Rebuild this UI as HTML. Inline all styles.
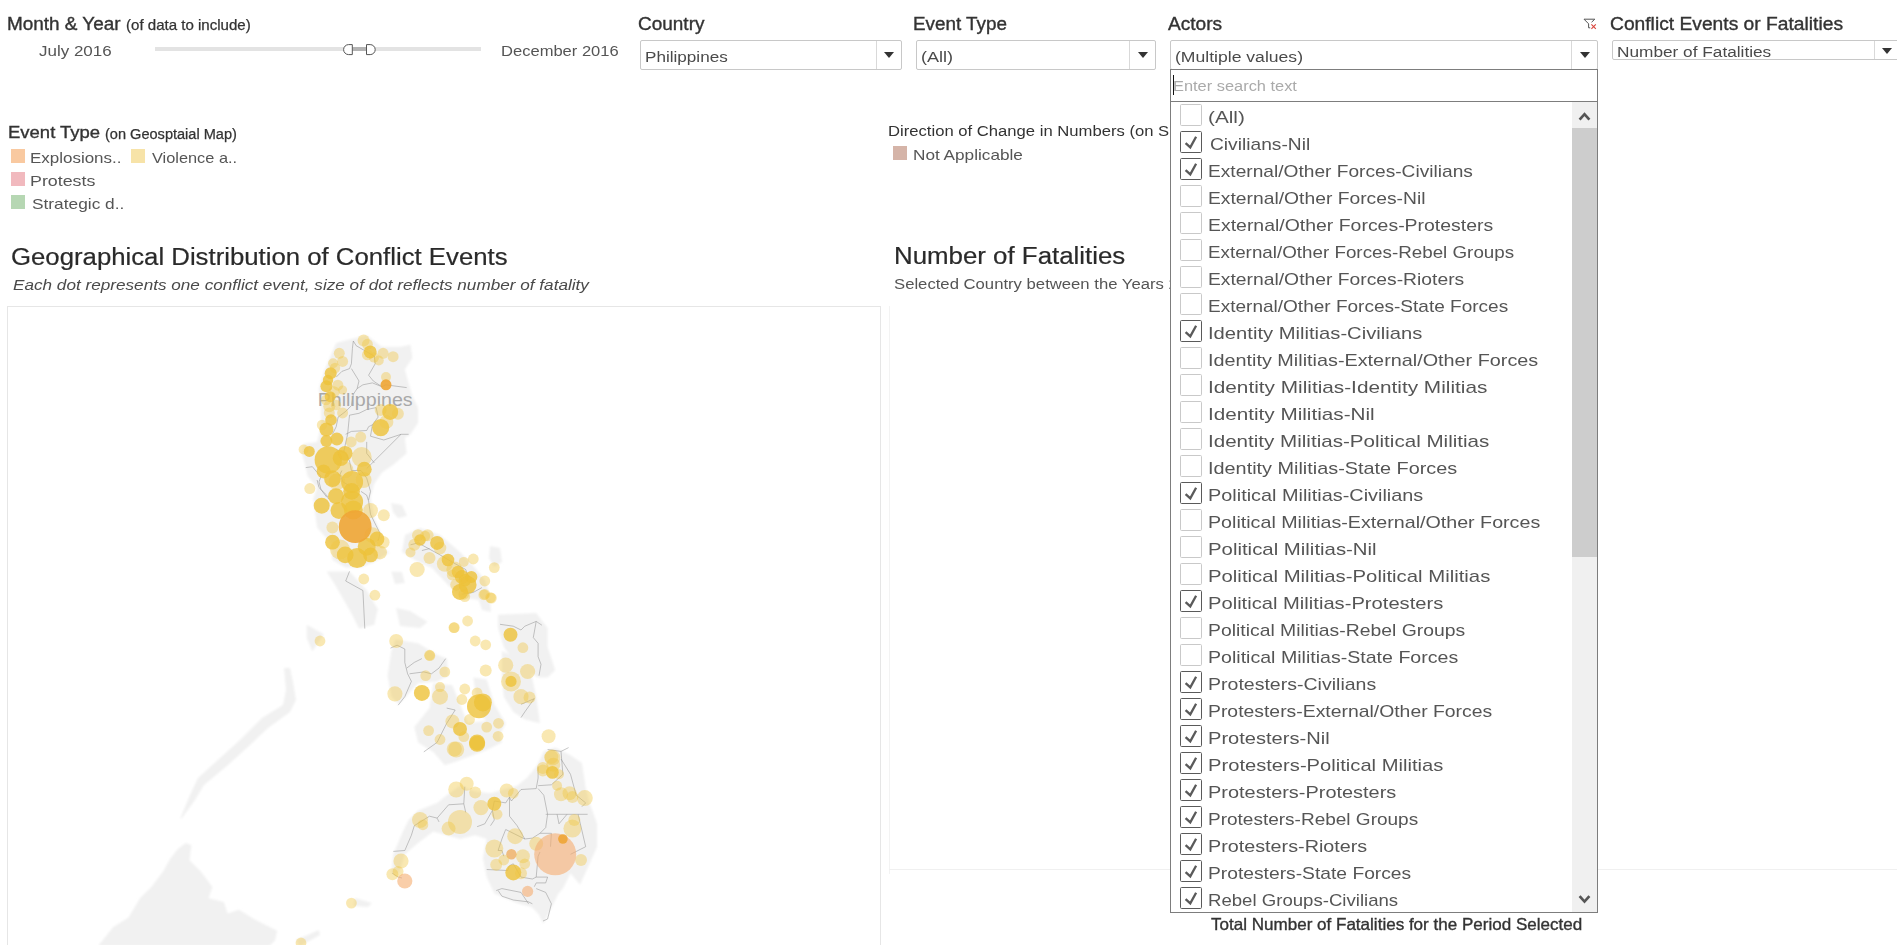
<!DOCTYPE html>
<html><head><meta charset="utf-8"><style>
*{margin:0;padding:0;box-sizing:border-box}
html,body{width:1897px;height:945px;overflow:hidden;background:#fff;font-family:"Liberation Sans",sans-serif}
.t{position:absolute;white-space:nowrap;line-height:1;transform-origin:0 0}
.a{position:absolute}
.dd{position:absolute;border:1px solid #c8c8c8;border-radius:2px;background:#fff}
.dd .dv{position:absolute;top:0;bottom:0;width:1px;background:#d9d9d9}
.tri{position:absolute;width:0;height:0;border-left:5px solid transparent;border-right:5px solid transparent;border-top:6px solid #333}
.cb{position:absolute;left:1180.2px;width:21.6px;height:21.6px;border:1px solid #c9c9c9;border-radius:1.6px;background:#fff}
.cb.on{border:1.2px solid #5a5a5a}
.cb svg{position:absolute;left:-1.2px;top:-1.2px}
</style></head><body>
<!-- slider -->
<div class="a" style="left:155px;top:47px;width:326px;height:4px;background:#e3e3e3"></div>
<div class="a" style="left:352px;top:47px;width:15px;height:4px;background:#b3b3b3"></div>
<svg class="a" style="left:340px;top:40px" width="40" height="18" viewBox="0 0 40 18">
<path d="M12.3 4.6 H8.6 A5 5 0 0 0 8.6 14.6 H12.3 Z" fill="#fff" stroke="#555" stroke-width="1"/>
<path d="M26.5 4.6 H30.2 A5 5 0 0 1 30.2 14.6 H26.5 Z" fill="#fff" stroke="#555" stroke-width="1"/>
</svg>
<!-- dropdowns -->
<div class="dd" style="left:640px;top:40px;width:262px;height:30px"><div class="dv" style="left:235px"></div><div class="tri" style="left:243px;top:11px"></div></div>
<div class="dd" style="left:916px;top:40px;width:240px;height:30px"><div class="dv" style="left:212px"></div><div class="tri" style="left:221px;top:11px"></div></div>
<div class="dd" style="left:1170px;top:40px;width:428px;height:30px"><div class="dv" style="left:400px"></div><div class="tri" style="left:408.5px;top:11px"></div></div>
<div class="dd" style="left:1612px;top:40px;width:300px;height:20px"><div class="dv" style="left:261px"></div><div class="tri" style="left:269px;top:6.5px"></div></div>
<!-- filter icon -->
<svg class="a" style="left:1582px;top:17px" width="16" height="14" viewBox="0 0 16 14">
<path d="M2 2.2 H12.8 L9.6 5.2 M2 2.2 L6.6 6.8 V10.8 H8.2" fill="none" stroke="#555" stroke-width="1"/>
<path d="M9.4 7.4 L13.8 11.8 M13.8 7.4 L9.4 11.8" stroke="#d9453c" stroke-width="1.1"/>
</svg>
<!-- legend swatches -->
<div class="a" style="left:11px;top:149px;width:14px;height:14px;background:#f9c9a0"></div>
<div class="a" style="left:131px;top:149px;width:14px;height:14px;background:#f7e3a8"></div>
<div class="a" style="left:11px;top:172px;width:14px;height:14px;background:#f1b9be"></div>
<div class="a" style="left:11px;top:195px;width:14px;height:14px;background:#b6d7b3"></div>
<div class="a" style="left:893px;top:146px;width:14px;height:14px;background:#d5b4a8"></div>
<!-- map frame -->
<svg class="a" style="left:0;top:0" width="1897" height="945" viewBox="0 0 1897 945"><defs><clipPath id="mc"><rect x="8.5" y="307" width="872" height="640"/></clipPath><filter id="bl" x="-5%" y="-5%" width="110%" height="110%"><feGaussianBlur stdDeviation="0.8"/></filter><filter id="bd" x="-5%" y="-5%" width="110%" height="110%"><feGaussianBlur stdDeviation="0.6"/></filter></defs><g clip-path="url(#mc)">
<g fill="#f1f1f1" filter="url(#bl)">
<polygon points="336.2,342.9 351.4,339.0 366.7,335.2 381.9,346.7 401.0,346.7 410.5,344.8 412.4,358.0 404.8,369.5 408.6,382.9 412.4,396.2 418.0,407.6 418.0,422.9 410.5,434.3 404.8,438.0 406.7,453.3 393.3,464.8 381.9,472.4 374.3,483.8 370.5,497.0 374.3,518.0 381.9,535.2 378.0,544.8 389.5,552.4 374.3,561.9 361.0,567.6 345.7,567.6 332.4,560.0 330.5,542.9 317.1,527.6 313.3,499.0 317.1,487.6 307.6,476.2 305.7,466.7 301.9,453.3 303.8,443.8 317.1,441.9 321.0,426.7 321.0,407.6 319.0,388.6 324.8,369.5 330.5,356.2"/>
<polygon points="405.0,535.0 420.0,528.0 440.0,535.0 460.0,552.0 475.0,568.0 485.0,580.0 490.0,596.0 480.0,600.0 462.0,598.0 448.0,585.0 432.0,568.0 415.0,560.0 402.0,552.0"/>
<polygon points="391.0,503.0 402.0,505.0 407.0,516.0 398.0,518.0 393.0,512.0"/>
<polygon points="490.0,546.0 500.0,548.0 502.0,562.0 494.0,567.0 489.0,558.0"/>
<polygon points="478.0,598.0 490.0,600.0 491.0,612.0 482.0,610.0"/>
<polygon points="326.7,571.4 349.5,571.4 366.7,590.5 378.0,609.5 377.1,612.0 374.3,624.8 359.0,628.6 351.4,613.3 336.2,586.7"/>
<polygon points="391.4,571.4 402.0,572.0 404.8,582.9 395.0,584.0"/>
<polygon points="498.1,614.8 536.2,612.9 547.6,628.1 547.6,647.1 555.2,670.0 547.6,677.6 538.1,677.6 528.6,671.9 517.1,666.2 503.8,647.1 498.1,628.1"/>
<polygon points="501.9,651.0 513.3,656.7 530.5,670.0 536.2,696.7 540.0,723.3 524.8,719.5 513.3,711.9 503.8,696.7 501.9,677.6"/>
<polygon points="473.3,677.6 486.7,679.5 494.3,704.3 505.7,723.3 500.0,734.8 486.7,723.3 477.1,704.3"/>
<polygon points="395.2,639.5 418.1,643.3 437.1,654.8 446.7,658.6 448.6,675.7 437.1,681.4 418.1,683.3 399.0,704.3 391.4,696.7 387.6,675.7 391.4,651.0"/>
<polygon points="433.3,683.3 452.4,685.2 460.0,704.3 467.6,723.3 498.1,719.5 501.9,742.4 486.7,750.0 456.2,761.4 444.8,765.2 433.3,751.9 418.1,742.4 414.3,727.1 429.5,708.1"/>
<polygon points="396.0,608.0 410.0,611.0 427.6,622.0 420.0,628.0 400.0,626.0"/>
<polygon points="391.4,873.3 393.3,854.3 402.9,831.4 408.6,820.0 418.1,810.5 437.1,802.9 446.7,795.2 460.0,785.7 475.2,791.4 490.5,793.3 503.8,789.5 517.1,785.7 526.7,778.1 536.2,766.7 543.8,751.4 555.2,747.6 570.5,755.2 581.9,762.9 585.7,787.6 589.5,802.9 597.1,823.8 597.1,846.7 589.5,863.8 580.0,884.8 570.5,873.3 562.9,888.6 558.5,893.5 551.8,907.0 543.3,923.8 538.3,913.7 531.5,907.0 518.0,903.6 494.4,893.5 486.7,877.1 482.9,858.1 486.7,839.0 475.2,835.2 460.0,839.0 446.7,835.2 433.3,831.4 418.1,842.9 404.8,854.3 399.0,873.3"/>
<polygon points="284.0,668.0 286.0,690.0 283.0,705.0 262.0,718.0 240.0,740.0 220.0,758.0 198.0,778.0 190.0,795.0 180.0,819.0 182.0,818.0 195.0,800.0 204.0,785.0 228.0,765.0 250.0,745.0 268.0,728.0 290.0,712.0 296.0,700.0 293.0,682.0 290.0,668.0"/>
<polygon points="306.7,624.8 323.8,634.3 312.4,651.4 306.7,638.1"/>
<polygon points="185.7,843.1 191.4,845.0 189.5,860.2 201.0,871.7 212.4,886.9 208.6,898.3 223.8,902.1 227.6,913.6 239.0,909.8 254.3,919.3 277.1,930.7 275.2,940.2 269.5,946.0 98.1,946.0 113.3,926.9 128.6,917.4 140.0,898.3 151.4,886.9 162.9,871.7 170.5,858.3 178.1,848.8"/>
<polygon points="355.0,898.0 372.0,903.0 368.0,907.0 354.0,906.0"/>
<polygon points="296.0,940.0 319.0,930.0 320.0,935.0 300.0,946.0"/>
</g><g fill="none" stroke="#8c8c8c" stroke-width="0.5" stroke-linejoin="round">
<polyline points="353.3,341.0 352.4,348.6 351.4,363.8 349.5,368.6 341.9,371.4 336.2,377.1"/>
<polyline points="353.3,341.0 356.2,345.7 374.3,356.2 375.2,363.8 368.6,375.2 373.3,381.0 381.9,386.7"/>
<polyline points="351.4,368.6 359.0,381.0 357.1,388.6"/>
<polyline points="357.1,388.6 362.9,384.8 372.4,382.9 381.9,386.7 385.7,384.8 406.7,387.6"/>
<polyline points="357.1,388.6 353.3,394.3 351.4,405.7 345.7,411.4 338.1,417.1 336.2,426.7 332.4,434.3"/>
<polyline points="349.5,415.2 359.0,413.3 366.7,409.5 376.2,407.6 378.1,417.1 372.4,424.8 368.6,426.7 366.7,430.5 351.4,431.4 345.7,434.3"/>
<polyline points="349.5,415.2 347.6,434.3 343.8,451.4"/>
<polyline points="372.4,424.8 370.5,436.2 383.8,440.0 401.0,434.3 408.6,434.3"/>
<polyline points="401.0,434.3 366.7,468.6"/>
<polyline points="366.7,441.9 366.7,453.3 374.3,462.9"/>
<polyline points="305.7,467.6 312.4,466.7 317.1,472.4 321.0,476.2 319.0,481.9 321.0,489.5 326.7,497.1"/>
<polyline points="336.2,449.5 345.7,453.3 349.5,461.0 351.4,470.5 361.0,470.5 366.7,478.1 370.5,491.4 368.6,500.0"/>
<polyline points="341.9,470.5 340.0,474.3 342.9,481.9 350.0,486.0"/>
<polyline points="317.1,480.0 319.0,487.6 326.7,495.2 328.6,499.0"/>
<polyline points="361.0,491.4 366.7,495.2 368.6,501.0 370.5,514.3 376.2,525.7 380.0,533.3 378.1,541.0"/>
<polyline points="349.5,571.4 345.7,581.0 362.9,590.5 364.8,628.6"/>
<polyline points="410.5,544.8 418.1,542.9 439.0,554.3 452.0,562.0 465.7,569.5 467.6,575.2"/>
<polyline points="421.9,550.5 429.5,548.6"/>
<polyline points="461.9,594.3 473.3,592.4 481.9,587.6"/>
<polyline points="500.0,624.3 513.3,626.2 521.0,630.0 524.8,626.2 536.2,621.4 541.9,625.2"/>
<polyline points="536.2,621.4 533.3,637.6 538.1,643.3 538.1,656.7 541.0,664.3 539.0,675.7"/>
<polyline points="521.0,704.3 525.7,702.4 534.3,698.6 524.8,711.9 521.0,717.6"/>
<polyline points="390.5,648.1 397.1,645.2 404.8,649.0 404.8,662.4 407.6,673.8 411.4,681.4 404.8,696.7 398.1,705.2"/>
<polyline points="406.7,668.1 414.3,662.4 421.9,658.6"/>
<polyline points="409.5,673.8 423.8,671.9 431.4,673.8 439.0,668.1 445.7,658.6"/>
<polyline points="446.7,708.1 455.2,710.0 446.7,723.3 437.1,742.4 423.8,751.9"/>
<polyline points="393.3,851.4 404.8,850.5 411.4,835.2 414.3,825.7 429.5,816.2 437.1,818.1 439.0,821.9"/>
<polyline points="437.1,818.1 448.6,804.8 463.8,803.8 464.8,786.7"/>
<polyline points="463.8,803.8 465.7,812.4"/>
<polyline points="477.1,826.7 484.8,823.8 492.4,810.5 494.3,801.0 505.7,802.9 509.5,797.1 511.4,801.0 521.0,789.5 536.2,788.6 538.1,778.1 538.1,766.7"/>
<polyline points="492.4,810.5 494.3,820.0 490.5,825.7"/>
<polyline points="509.5,797.1 509.5,816.2 517.1,825.7 524.8,839.0 532.4,838.1 540.0,833.3 545.7,827.6 547.6,814.3 543.8,795.2 538.1,788.6"/>
<polyline points="538.1,785.7 551.4,784.8 562.9,774.3 561.0,751.4 568.6,747.6"/>
<polyline points="547.6,749.5 561.0,751.4"/>
<polyline points="561.0,759.0 570.5,774.3 576.2,795.2 585.7,802.9 581.9,806.7"/>
<polyline points="545.7,814.3 587.6,814.3"/>
<polyline points="557.1,814.3 559.0,823.8 567.0,814.3"/>
<polyline points="578.1,814.3 585.7,846.7 570.5,854.3"/>
<polyline points="540.0,833.3 551.4,833.3 550.5,846.7"/>
<polyline points="524.8,839.0 505.7,829.5 501.9,839.0 498.1,850.5 501.9,850.5 503.8,856.2"/>
<polyline points="486.7,869.5 507.6,870.5 509.5,865.7 513.3,863.8 521.0,877.1 532.4,879.0 536.2,877.1 538.1,856.2 540.0,852.0"/>
<polyline points="536.2,877.1 547.6,877.1 545.7,882.9 536.2,882.9 534.3,886.7"/>
<polyline points="496.2,890.5 501.9,888.6 521.0,892.4 528.6,903.8"/>
<polyline points="536.2,888.6 545.7,892.4 551.4,903.8 547.6,919.0 543.0,921.0"/>
<polyline points="498.1,890.5 501.9,896.2 513.3,900.0 528.6,901.9 532.4,903.8"/>
<polyline points="392.0,873.0 398.0,877.0 402.0,878.0"/>
</g>
<text x="0" y="0" transform="translate(317.74 405.5) scale(1.0609 1)" font-family="Liberation Sans" font-size="18.5" fill="#a8a8a8">Philippines</text>
<g filter="url(#bd)">
<circle cx="363.6" cy="340.5" r="6.0" fill="#efc640" fill-opacity="0.40"/>
<circle cx="367.4" cy="344.3" r="5.5" fill="#efc640" fill-opacity="0.40"/>
<circle cx="370.2" cy="351.9" r="6.5" fill="#edc23a" fill-opacity="0.80"/>
<circle cx="367.4" cy="354.8" r="5.5" fill="#efc640" fill-opacity="0.40"/>
<circle cx="374.0" cy="357.6" r="5.0" fill="#efc640" fill-opacity="0.40"/>
<circle cx="378.8" cy="360.5" r="5.0" fill="#efc640" fill-opacity="0.40"/>
<circle cx="383.1" cy="353.3" r="5.5" fill="#efc640" fill-opacity="0.40"/>
<circle cx="393.1" cy="356.7" r="5.5" fill="#efc640" fill-opacity="0.40"/>
<circle cx="339.3" cy="353.3" r="5.5" fill="#efc640" fill-opacity="0.40"/>
<circle cx="342.6" cy="361.4" r="5.5" fill="#efc640" fill-opacity="0.40"/>
<circle cx="333.1" cy="363.3" r="5.0" fill="#efc640" fill-opacity="0.40"/>
<circle cx="330.7" cy="373.3" r="6.0" fill="#edc23a" fill-opacity="0.80"/>
<circle cx="326.4" cy="386.2" r="6.0" fill="#edc23a" fill-opacity="0.80"/>
<circle cx="337.9" cy="385.2" r="5.5" fill="#efc640" fill-opacity="0.40"/>
<circle cx="342.6" cy="390.0" r="4.5" fill="#efc640" fill-opacity="0.40"/>
<circle cx="330.2" cy="396.7" r="5.5" fill="#edc23a" fill-opacity="0.80"/>
<circle cx="329.3" cy="406.2" r="6.0" fill="#efc640" fill-opacity="0.40"/>
<circle cx="329.3" cy="412.9" r="5.5" fill="#efc640" fill-opacity="0.40"/>
<circle cx="342.6" cy="412.9" r="5.5" fill="#efc640" fill-opacity="0.40"/>
<circle cx="386.0" cy="377.1" r="5.0" fill="#efc640" fill-opacity="0.40"/>
<circle cx="386.0" cy="384.8" r="5.5" fill="#f0a535" fill-opacity="0.90"/>
<circle cx="380.7" cy="410.0" r="6.0" fill="#efc640" fill-opacity="0.40"/>
<circle cx="390.2" cy="411.9" r="8.0" fill="#edc23a" fill-opacity="0.80"/>
<circle cx="397.9" cy="413.8" r="6.0" fill="#efc640" fill-opacity="0.40"/>
<circle cx="380.7" cy="427.6" r="8.6" fill="#edc23a" fill-opacity="0.80"/>
<circle cx="386.4" cy="421.9" r="7.0" fill="#efc640" fill-opacity="0.40"/>
<circle cx="326.4" cy="429.5" r="7.0" fill="#edc23a" fill-opacity="0.80"/>
<circle cx="336.9" cy="439.0" r="6.5" fill="#edc23a" fill-opacity="0.80"/>
<circle cx="326.4" cy="441.0" r="6.0" fill="#edc23a" fill-opacity="0.80"/>
<circle cx="309.3" cy="451.4" r="5.5" fill="#edc23a" fill-opacity="0.80"/>
<circle cx="303.6" cy="449.5" r="5.0" fill="#efc640" fill-opacity="0.40"/>
<circle cx="328.3" cy="460.0" r="13.7" fill="#edc23a" fill-opacity="0.80"/>
<circle cx="340.7" cy="458.1" r="8.0" fill="#edc23a" fill-opacity="0.80"/>
<circle cx="351.2" cy="441.9" r="5.5" fill="#efc640" fill-opacity="0.40"/>
<circle cx="360.7" cy="437.1" r="5.5" fill="#efc640" fill-opacity="0.40"/>
<circle cx="361.7" cy="457.1" r="10.0" fill="#efc640" fill-opacity="0.40"/>
<circle cx="352.1" cy="481.9" r="11.0" fill="#edc23a" fill-opacity="0.80"/>
<circle cx="336.9" cy="481.9" r="8.4" fill="#efc640" fill-opacity="0.40"/>
<circle cx="363.6" cy="480.0" r="8.0" fill="#efc640" fill-opacity="0.40"/>
<circle cx="336.0" cy="496.2" r="8.0" fill="#edc23a" fill-opacity="0.80"/>
<circle cx="352.1" cy="501.9" r="11.0" fill="#edc23a" fill-opacity="0.80"/>
<circle cx="321.7" cy="505.7" r="8.0" fill="#edc23a" fill-opacity="0.80"/>
<circle cx="309.8" cy="488.6" r="5.5" fill="#efc640" fill-opacity="0.40"/>
<circle cx="323.6" cy="471.4" r="7.0" fill="#edc23a" fill-opacity="0.80"/>
<circle cx="345.0" cy="470.0" r="8.4" fill="#efc640" fill-opacity="0.40"/>
<circle cx="345.2" cy="453.3" r="7.4" fill="#edc23a" fill-opacity="0.80"/>
<circle cx="364.3" cy="469.2" r="7.4" fill="#edc23a" fill-opacity="0.80"/>
<circle cx="332.5" cy="478.7" r="8.4" fill="#edc23a" fill-opacity="0.80"/>
<circle cx="351.6" cy="491.4" r="8.4" fill="#edc23a" fill-opacity="0.80"/>
<circle cx="338.9" cy="510.5" r="8.4" fill="#edc23a" fill-opacity="0.80"/>
<circle cx="370.6" cy="510.5" r="7.4" fill="#efc640" fill-opacity="0.40"/>
<circle cx="332.5" cy="542.2" r="7.4" fill="#edc23a" fill-opacity="0.80"/>
<circle cx="377.0" cy="539.0" r="7.4" fill="#edc23a" fill-opacity="0.80"/>
<circle cx="345.2" cy="554.9" r="8.4" fill="#edc23a" fill-opacity="0.80"/>
<circle cx="370.6" cy="554.9" r="7.4" fill="#edc23a" fill-opacity="0.80"/>
<circle cx="383.3" cy="542.2" r="6.3" fill="#efc640" fill-opacity="0.40"/>
<circle cx="335.0" cy="368.0" r="5.2" fill="#efc640" fill-opacity="0.40"/>
<circle cx="328.0" cy="380.0" r="5.2" fill="#edc23a" fill-opacity="0.80"/>
<circle cx="334.0" cy="392.0" r="5.8" fill="#efc640" fill-opacity="0.40"/>
<circle cx="326.0" cy="400.0" r="5.2" fill="#efc640" fill-opacity="0.40"/>
<circle cx="336.0" cy="405.0" r="5.2" fill="#efc640" fill-opacity="0.40"/>
<circle cx="331.0" cy="420.0" r="5.8" fill="#edc23a" fill-opacity="0.80"/>
<circle cx="322.0" cy="425.0" r="5.2" fill="#efc640" fill-opacity="0.40"/>
<circle cx="420.0" cy="540.0" r="5.8" fill="#edc23a" fill-opacity="0.80"/>
<circle cx="425.0" cy="536.0" r="5.2" fill="#efc640" fill-opacity="0.40"/>
<circle cx="440.0" cy="548.0" r="6.3" fill="#efc640" fill-opacity="0.40"/>
<circle cx="448.0" cy="560.0" r="6.3" fill="#edc23a" fill-opacity="0.80"/>
<circle cx="458.0" cy="572.0" r="6.3" fill="#edc23a" fill-opacity="0.80"/>
<circle cx="465.0" cy="580.0" r="6.3" fill="#edc23a" fill-opacity="0.80"/>
<circle cx="452.0" cy="575.0" r="5.2" fill="#efc640" fill-opacity="0.40"/>
<circle cx="332.4" cy="527.6" r="6.0" fill="#efc640" fill-opacity="0.40"/>
<circle cx="353.3" cy="510.0" r="9.5" fill="#edc23a" fill-opacity="0.80"/>
<circle cx="372.4" cy="535.2" r="8.0" fill="#efc640" fill-opacity="0.40"/>
<circle cx="340.0" cy="549.5" r="10.0" fill="#efc640" fill-opacity="0.40"/>
<circle cx="357.1" cy="558.1" r="10.0" fill="#edc23a" fill-opacity="0.80"/>
<circle cx="366.7" cy="546.7" r="9.0" fill="#edc23a" fill-opacity="0.80"/>
<circle cx="380.0" cy="552.4" r="7.0" fill="#efc640" fill-opacity="0.40"/>
<circle cx="383.8" cy="515.2" r="6.0" fill="#efc640" fill-opacity="0.40"/>
<circle cx="363.8" cy="579.0" r="5.4" fill="#efc640" fill-opacity="0.40"/>
<circle cx="374.9" cy="595.2" r="5.4" fill="#efc640" fill-opacity="0.40"/>
<circle cx="417.1" cy="569.5" r="7.6" fill="#efc640" fill-opacity="0.40"/>
<circle cx="410.5" cy="552.4" r="5.0" fill="#efc640" fill-opacity="0.40"/>
<circle cx="418.0" cy="535.2" r="6.0" fill="#efc640" fill-opacity="0.40"/>
<circle cx="427.6" cy="535.2" r="6.0" fill="#efc640" fill-opacity="0.40"/>
<circle cx="437.1" cy="542.9" r="7.0" fill="#edc23a" fill-opacity="0.80"/>
<circle cx="414.3" cy="544.8" r="6.0" fill="#efc640" fill-opacity="0.40"/>
<circle cx="429.5" cy="558.1" r="6.0" fill="#efc640" fill-opacity="0.40"/>
<circle cx="444.8" cy="563.8" r="8.0" fill="#efc640" fill-opacity="0.40"/>
<circle cx="454.3" cy="569.5" r="8.0" fill="#efc640" fill-opacity="0.40"/>
<circle cx="461.9" cy="577.1" r="7.0" fill="#edc23a" fill-opacity="0.80"/>
<circle cx="471.4" cy="577.1" r="6.0" fill="#edc23a" fill-opacity="0.80"/>
<circle cx="467.6" cy="584.8" r="9.0" fill="#edc23a" fill-opacity="0.80"/>
<circle cx="456.2" cy="584.8" r="6.0" fill="#efc640" fill-opacity="0.40"/>
<circle cx="463.8" cy="594.3" r="5.4" fill="#efc640" fill-opacity="0.40"/>
<circle cx="473.3" cy="559.0" r="5.4" fill="#efc640" fill-opacity="0.40"/>
<circle cx="484.8" cy="581.0" r="5.4" fill="#efc640" fill-opacity="0.40"/>
<circle cx="484.8" cy="594.3" r="5.4" fill="#efc640" fill-opacity="0.40"/>
<circle cx="491.4" cy="598.1" r="5.4" fill="#efc640" fill-opacity="0.40"/>
<circle cx="494.3" cy="567.6" r="5.4" fill="#efc640" fill-opacity="0.40"/>
<circle cx="463.8" cy="561.9" r="5.0" fill="#efc640" fill-opacity="0.40"/>
<circle cx="320.0" cy="641.0" r="5.4" fill="#efc640" fill-opacity="0.40"/>
<circle cx="396.2" cy="641.0" r="7.0" fill="#efc640" fill-opacity="0.40"/>
<circle cx="429.5" cy="655.2" r="5.4" fill="#efc640" fill-opacity="0.40"/>
<circle cx="454.3" cy="627.6" r="5.4" fill="#efc640" fill-opacity="0.40"/>
<circle cx="467.6" cy="621.0" r="5.4" fill="#efc640" fill-opacity="0.40"/>
<circle cx="475.2" cy="641.0" r="5.4" fill="#efc640" fill-opacity="0.40"/>
<circle cx="485.7" cy="644.8" r="5.4" fill="#efc640" fill-opacity="0.40"/>
<circle cx="460.0" cy="591.9" r="8.0" fill="#edc23a" fill-opacity="0.80"/>
<circle cx="483.8" cy="594.8" r="5.4" fill="#efc640" fill-opacity="0.40"/>
<circle cx="490.5" cy="597.6" r="5.4" fill="#efc640" fill-opacity="0.40"/>
<circle cx="464.8" cy="596.7" r="5.4" fill="#efc640" fill-opacity="0.40"/>
<circle cx="453.9" cy="627.7" r="5.4" fill="#efc640" fill-opacity="0.40"/>
<circle cx="510.5" cy="634.8" r="7.0" fill="#edc23a" fill-opacity="0.80"/>
<circle cx="522.9" cy="647.7" r="5.4" fill="#efc640" fill-opacity="0.40"/>
<circle cx="429.9" cy="655.7" r="5.4" fill="#efc640" fill-opacity="0.40"/>
<circle cx="444.8" cy="671.9" r="5.4" fill="#efc640" fill-opacity="0.40"/>
<circle cx="425.7" cy="675.7" r="5.4" fill="#efc640" fill-opacity="0.40"/>
<circle cx="394.9" cy="693.8" r="7.6" fill="#efc640" fill-opacity="0.40"/>
<circle cx="421.9" cy="692.9" r="8.0" fill="#edc23a" fill-opacity="0.80"/>
<circle cx="440.0" cy="696.7" r="8.0" fill="#efc640" fill-opacity="0.40"/>
<circle cx="440.0" cy="687.1" r="5.0" fill="#efc640" fill-opacity="0.40"/>
<circle cx="464.8" cy="689.0" r="5.4" fill="#efc640" fill-opacity="0.40"/>
<circle cx="461.9" cy="699.5" r="5.4" fill="#efc640" fill-opacity="0.40"/>
<circle cx="477.1" cy="692.9" r="5.4" fill="#efc640" fill-opacity="0.40"/>
<circle cx="479.0" cy="706.2" r="12.0" fill="#edc23a" fill-opacity="0.80"/>
<circle cx="482.9" cy="702.4" r="9.0" fill="#edc23a" fill-opacity="0.80"/>
<circle cx="469.5" cy="719.5" r="5.4" fill="#efc640" fill-opacity="0.40"/>
<circle cx="452.4" cy="721.4" r="7.0" fill="#efc640" fill-opacity="0.40"/>
<circle cx="460.0" cy="729.0" r="7.0" fill="#edc23a" fill-opacity="0.80"/>
<circle cx="463.8" cy="736.7" r="5.4" fill="#efc640" fill-opacity="0.40"/>
<circle cx="477.1" cy="742.4" r="8.0" fill="#edc23a" fill-opacity="0.80"/>
<circle cx="454.3" cy="749.0" r="7.6" fill="#efc640" fill-opacity="0.40"/>
<circle cx="486.7" cy="727.1" r="5.4" fill="#efc640" fill-opacity="0.40"/>
<circle cx="498.5" cy="723.3" r="5.4" fill="#efc640" fill-opacity="0.40"/>
<circle cx="498.1" cy="736.3" r="5.4" fill="#efc640" fill-opacity="0.40"/>
<circle cx="428.6" cy="730.6" r="5.4" fill="#efc640" fill-opacity="0.40"/>
<circle cx="440.0" cy="739.5" r="5.4" fill="#efc640" fill-opacity="0.40"/>
<circle cx="485.7" cy="670.4" r="6.0" fill="#efc640" fill-opacity="0.40"/>
<circle cx="505.7" cy="665.2" r="7.6" fill="#efc640" fill-opacity="0.40"/>
<circle cx="527.6" cy="671.5" r="7.6" fill="#efc640" fill-opacity="0.40"/>
<circle cx="511.0" cy="681.4" r="10.0" fill="#efc640" fill-opacity="0.40"/>
<circle cx="511.0" cy="681.4" r="5.6" fill="#edc23a" fill-opacity="0.80"/>
<circle cx="521.0" cy="696.7" r="7.6" fill="#efc640" fill-opacity="0.40"/>
<circle cx="529.5" cy="697.6" r="6.0" fill="#efc640" fill-opacity="0.40"/>
<circle cx="548.6" cy="736.3" r="7.0" fill="#efc640" fill-opacity="0.40"/>
<circle cx="552.4" cy="757.6" r="8.0" fill="#efc640" fill-opacity="0.40"/>
<circle cx="542.9" cy="768.0" r="6.0" fill="#efc640" fill-opacity="0.40"/>
<circle cx="456.2" cy="749.5" r="8.0" fill="#efc640" fill-opacity="0.40"/>
<circle cx="477.1" cy="743.8" r="8.0" fill="#edc23a" fill-opacity="0.80"/>
<circle cx="551.4" cy="757.1" r="7.0" fill="#efc640" fill-opacity="0.40"/>
<circle cx="553.3" cy="764.8" r="7.0" fill="#efc640" fill-opacity="0.40"/>
<circle cx="542.9" cy="770.5" r="6.0" fill="#efc640" fill-opacity="0.40"/>
<circle cx="552.4" cy="772.4" r="6.4" fill="#edc23a" fill-opacity="0.80"/>
<circle cx="559.0" cy="774.3" r="5.0" fill="#efc640" fill-opacity="0.40"/>
<circle cx="557.1" cy="785.7" r="5.0" fill="#efc640" fill-opacity="0.40"/>
<circle cx="561.0" cy="794.3" r="7.0" fill="#efc640" fill-opacity="0.40"/>
<circle cx="569.5" cy="793.3" r="7.0" fill="#efc640" fill-opacity="0.40"/>
<circle cx="572.4" cy="797.1" r="6.0" fill="#efc640" fill-opacity="0.40"/>
<circle cx="584.8" cy="798.1" r="8.0" fill="#efc640" fill-opacity="0.40"/>
<circle cx="456.2" cy="789.5" r="8.0" fill="#efc640" fill-opacity="0.40"/>
<circle cx="466.7" cy="783.8" r="7.0" fill="#efc640" fill-opacity="0.40"/>
<circle cx="475.2" cy="792.4" r="6.0" fill="#efc640" fill-opacity="0.40"/>
<circle cx="506.7" cy="790.5" r="7.0" fill="#efc640" fill-opacity="0.40"/>
<circle cx="513.3" cy="793.3" r="5.4" fill="#efc640" fill-opacity="0.40"/>
<circle cx="481.0" cy="807.6" r="7.6" fill="#efc640" fill-opacity="0.40"/>
<circle cx="494.3" cy="803.8" r="7.0" fill="#edc23a" fill-opacity="0.80"/>
<circle cx="497.1" cy="814.3" r="5.4" fill="#efc640" fill-opacity="0.40"/>
<circle cx="420.0" cy="820.0" r="8.0" fill="#efc640" fill-opacity="0.40"/>
<circle cx="422.9" cy="824.8" r="5.4" fill="#efc640" fill-opacity="0.40"/>
<circle cx="460.0" cy="821.9" r="12.0" fill="#efc640" fill-opacity="0.40"/>
<circle cx="448.6" cy="828.6" r="7.0" fill="#efc640" fill-opacity="0.40"/>
<circle cx="401.0" cy="861.0" r="7.6" fill="#efc640" fill-opacity="0.40"/>
<circle cx="392.4" cy="874.3" r="6.0" fill="#efc640" fill-opacity="0.40"/>
<circle cx="398.1" cy="871.4" r="5.4" fill="#efc640" fill-opacity="0.40"/>
<circle cx="404.8" cy="881.0" r="7.6" fill="#f5ae72" fill-opacity="0.60"/>
<circle cx="515.2" cy="836.2" r="8.0" fill="#efc640" fill-opacity="0.40"/>
<circle cx="494.3" cy="848.6" r="9.0" fill="#efc640" fill-opacity="0.40"/>
<circle cx="511.4" cy="854.3" r="5.2" fill="#f0a040" fill-opacity="0.65"/>
<circle cx="522.9" cy="856.2" r="7.0" fill="#efc640" fill-opacity="0.40"/>
<circle cx="524.8" cy="863.8" r="5.4" fill="#efc640" fill-opacity="0.40"/>
<circle cx="496.2" cy="864.8" r="6.0" fill="#efc640" fill-opacity="0.40"/>
<circle cx="503.8" cy="860.0" r="5.4" fill="#efc640" fill-opacity="0.40"/>
<circle cx="513.3" cy="872.4" r="8.0" fill="#edc23a" fill-opacity="0.80"/>
<circle cx="521.0" cy="873.3" r="6.0" fill="#efc640" fill-opacity="0.40"/>
<circle cx="536.2" cy="843.8" r="7.0" fill="#efc640" fill-opacity="0.40"/>
<circle cx="572.4" cy="828.6" r="9.0" fill="#efc640" fill-opacity="0.40"/>
<circle cx="574.3" cy="820.0" r="6.0" fill="#efc640" fill-opacity="0.40"/>
<circle cx="581.0" cy="860.0" r="6.0" fill="#efc640" fill-opacity="0.40"/>
<circle cx="555.2" cy="854.3" r="21.0" fill="#f5ae72" fill-opacity="0.60"/>
<circle cx="562.9" cy="839.0" r="4.8" fill="#f0a535" fill-opacity="0.90"/>
<circle cx="527.6" cy="891.4" r="5.6" fill="#f5ae72" fill-opacity="0.60"/>
<circle cx="355.2" cy="526.7" r="16.4" fill="#f0a535" fill-opacity="0.90"/>
<circle cx="351.4" cy="903.1" r="5.4" fill="#efc640" fill-opacity="0.40"/>
<circle cx="301.0" cy="943.0" r="5.4" fill="#efc640" fill-opacity="0.40"/>
</g></g></svg>
<div class="a" style="left:7px;top:306px;width:874px;height:700px;border:1px solid #e6e6e6"></div>
<!-- fatalities panel -->
<div class="a" style="left:889px;top:306px;width:1px;height:568px;background:#f3f3f3"></div>
<div class="a" style="left:889px;top:869px;width:1008px;height:1px;background:#f0f0f0"></div>
<div class="t" style="left:6.92px;top:15.89px;font-size:17.5px;font-weight:normal;font-style:normal;color:#333;transform:scaleX(1.0807);-webkit-text-stroke:0.35px #333;">Month &amp; Year</div>
<div class="t" style="left:126.10px;top:18.43px;font-size:14.5px;font-weight:normal;font-style:normal;color:#333;transform:scaleX(1.0388);-webkit-text-stroke:0.25px #333;">(of data to include)</div>
<div class="t" style="left:39.00px;top:43.08px;font-size:15.5px;font-weight:normal;font-style:normal;color:#555;transform:scaleX(1.0954);">July 2016</div>
<div class="t" style="left:500.53px;top:43.28px;font-size:15.5px;font-weight:normal;font-style:normal;color:#555;transform:scaleX(1.0675);">December 2016</div>
<div class="t" style="left:637.60px;top:15.99px;font-size:17.5px;font-weight:normal;font-style:normal;color:#333;transform:scaleX(1.0841);-webkit-text-stroke:0.35px #333;">Country</div>
<div class="t" style="left:645.10px;top:48.78px;font-size:15.5px;font-weight:normal;font-style:normal;color:#4a4a4a;transform:scaleX(1.1036);">Philippines</div>
<div class="t" style="left:912.62px;top:15.99px;font-size:17.5px;font-weight:normal;font-style:normal;color:#333;transform:scaleX(1.0767);-webkit-text-stroke:0.35px #333;">Event Type</div>
<div class="t" style="left:921.10px;top:48.78px;font-size:15.5px;font-weight:normal;font-style:normal;color:#4a4a4a;transform:scaleX(1.1648);">(All)</div>
<div class="t" style="left:1167.80px;top:15.99px;font-size:17.5px;font-weight:normal;font-style:normal;color:#333;transform:scaleX(1.0914);-webkit-text-stroke:0.35px #333;">Actors</div>
<div class="t" style="left:1174.80px;top:48.78px;font-size:15.5px;font-weight:normal;font-style:normal;color:#4a4a4a;transform:scaleX(1.1342);">(Multiple values)</div>
<div class="t" style="left:1610.20px;top:15.99px;font-size:17.5px;font-weight:normal;font-style:normal;color:#333;transform:scaleX(1.0990);-webkit-text-stroke:0.35px #333;">Conflict Events or Fatalities</div>
<div class="t" style="left:1616.89px;top:43.88px;font-size:15.5px;font-weight:normal;font-style:normal;color:#4a4a4a;transform:scaleX(1.1121);">Number of Fatalities</div>
<div class="t" style="left:7.51px;top:124.01px;font-size:17px;font-weight:normal;font-style:normal;color:#333;transform:scaleX(1.0874);-webkit-text-stroke:0.35px #333;">Event Type</div>
<div class="t" style="left:104.80px;top:126.55px;font-size:14px;font-weight:normal;font-style:normal;color:#333;transform:scaleX(1.0398);-webkit-text-stroke:0.25px #333;">(on Geosptaial Map)</div>
<div class="t" style="left:30.47px;top:150.10px;font-size:15px;font-weight:normal;font-style:normal;color:#555;transform:scaleX(1.1308);">Explosions..</div>
<div class="t" style="left:152.20px;top:150.10px;font-size:15px;font-weight:normal;font-style:normal;color:#555;transform:scaleX(1.0891);">Violence a..</div>
<div class="t" style="left:30.41px;top:172.90px;font-size:15px;font-weight:normal;font-style:normal;color:#555;transform:scaleX(1.1884);">Protests</div>
<div class="t" style="left:31.60px;top:195.90px;font-size:15px;font-weight:normal;font-style:normal;color:#555;transform:scaleX(1.1538);">Strategic d..</div>
<div class="t" style="left:888.43px;top:122.68px;font-size:15.5px;font-weight:normal;font-style:normal;color:#333;transform:scaleX(1.0737);">Direction of Change in Numbers (on Slope)</div>
<div class="t" style="left:912.55px;top:146.90px;font-size:15px;font-weight:normal;font-style:normal;color:#555;transform:scaleX(1.1459);">Not Applicable</div>
<div class="t" style="left:10.98px;top:245.53px;font-size:23px;font-weight:normal;font-style:normal;color:#2a2a2a;transform:scaleX(1.1194);-webkit-text-stroke:0.2px #2a2a2a;">Geographical Distribution of Conflict Events</div>
<div class="t" style="left:12.70px;top:276.68px;font-size:15.5px;font-weight:normal;font-style:italic;color:#4a4a4a;transform:scaleX(1.1067);">Each dot represents one conflict event, size of dot reflects number of fatality</div>
<div class="t" style="left:893.58px;top:245.13px;font-size:23px;font-weight:normal;font-style:normal;color:#2a2a2a;transform:scaleX(1.1238);-webkit-text-stroke:0.2px #2a2a2a;">Number of Fatalities</div>
<div class="t" style="left:893.90px;top:276.48px;font-size:15.5px;font-weight:normal;font-style:normal;color:#555;transform:scaleX(1.0761);">Selected Country between the Years 2016 to 2016</div>
<div class="t" style="left:1210.50px;top:916.03px;font-size:16.5px;font-weight:normal;font-style:normal;color:#333;transform:scaleX(1.0325);-webkit-text-stroke:0.35px #333;">Total Number of Fatalities for the Period Selected</div>
<!-- actors dropdown list overlay -->
<div class="a" style="left:1170px;top:69px;width:428px;height:844px;background:#fff;border:1px solid #7d7d7d"></div>
<div class="a" style="left:1171px;top:101px;width:426px;height:1px;background:#7d7d7d"></div>
<div class="a" style="left:1173px;top:75px;width:1px;height:20px;background:#111"></div>
<div class="a" style="left:1572px;top:102px;width:25px;height:810px;background:#f0f0f0"></div>
<div class="a" style="left:1572px;top:128px;width:25px;height:429px;background:#cdcdcd"></div>
<svg class="a" style="left:1572px;top:102px" width="25" height="26" viewBox="0 0 25 26"><path d="M7.6 17.6 L12.5 12.2 L17.4 17.6" fill="none" stroke="#555" stroke-width="2.7"/></svg>
<svg class="a" style="left:1572px;top:886px" width="25" height="26" viewBox="0 0 25 26"><path d="M7.6 10.2 L12.5 15.6 L17.4 10.2" fill="none" stroke="#555" stroke-width="2.7"/></svg>
<div class="cb" style="top:104.2px"></div>
<div class="cb on" style="top:131.2px"><svg width="22" height="22" viewBox="0 0 22 22"><path d="M5.6 12.1 L10.3 16.4 L16.1 5.8" fill="none" stroke="#5a5a5a" stroke-width="2.3"/></svg></div>
<div class="cb on" style="top:158.2px"><svg width="22" height="22" viewBox="0 0 22 22"><path d="M5.6 12.1 L10.3 16.4 L16.1 5.8" fill="none" stroke="#5a5a5a" stroke-width="2.3"/></svg></div>
<div class="cb" style="top:185.2px"></div>
<div class="cb" style="top:212.2px"></div>
<div class="cb" style="top:239.2px"></div>
<div class="cb" style="top:266.2px"></div>
<div class="cb" style="top:293.2px"></div>
<div class="cb on" style="top:320.2px"><svg width="22" height="22" viewBox="0 0 22 22"><path d="M5.6 12.1 L10.3 16.4 L16.1 5.8" fill="none" stroke="#5a5a5a" stroke-width="2.3"/></svg></div>
<div class="cb" style="top:347.2px"></div>
<div class="cb" style="top:374.2px"></div>
<div class="cb" style="top:401.2px"></div>
<div class="cb" style="top:428.2px"></div>
<div class="cb" style="top:455.2px"></div>
<div class="cb on" style="top:482.2px"><svg width="22" height="22" viewBox="0 0 22 22"><path d="M5.6 12.1 L10.3 16.4 L16.1 5.8" fill="none" stroke="#5a5a5a" stroke-width="2.3"/></svg></div>
<div class="cb" style="top:509.2px"></div>
<div class="cb" style="top:536.2px"></div>
<div class="cb" style="top:563.2px"></div>
<div class="cb on" style="top:590.2px"><svg width="22" height="22" viewBox="0 0 22 22"><path d="M5.6 12.1 L10.3 16.4 L16.1 5.8" fill="none" stroke="#5a5a5a" stroke-width="2.3"/></svg></div>
<div class="cb" style="top:617.2px"></div>
<div class="cb" style="top:644.2px"></div>
<div class="cb on" style="top:671.2px"><svg width="22" height="22" viewBox="0 0 22 22"><path d="M5.6 12.1 L10.3 16.4 L16.1 5.8" fill="none" stroke="#5a5a5a" stroke-width="2.3"/></svg></div>
<div class="cb on" style="top:698.2px"><svg width="22" height="22" viewBox="0 0 22 22"><path d="M5.6 12.1 L10.3 16.4 L16.1 5.8" fill="none" stroke="#5a5a5a" stroke-width="2.3"/></svg></div>
<div class="cb on" style="top:725.2px"><svg width="22" height="22" viewBox="0 0 22 22"><path d="M5.6 12.1 L10.3 16.4 L16.1 5.8" fill="none" stroke="#5a5a5a" stroke-width="2.3"/></svg></div>
<div class="cb on" style="top:752.2px"><svg width="22" height="22" viewBox="0 0 22 22"><path d="M5.6 12.1 L10.3 16.4 L16.1 5.8" fill="none" stroke="#5a5a5a" stroke-width="2.3"/></svg></div>
<div class="cb on" style="top:779.2px"><svg width="22" height="22" viewBox="0 0 22 22"><path d="M5.6 12.1 L10.3 16.4 L16.1 5.8" fill="none" stroke="#5a5a5a" stroke-width="2.3"/></svg></div>
<div class="cb on" style="top:806.2px"><svg width="22" height="22" viewBox="0 0 22 22"><path d="M5.6 12.1 L10.3 16.4 L16.1 5.8" fill="none" stroke="#5a5a5a" stroke-width="2.3"/></svg></div>
<div class="cb on" style="top:833.2px"><svg width="22" height="22" viewBox="0 0 22 22"><path d="M5.6 12.1 L10.3 16.4 L16.1 5.8" fill="none" stroke="#5a5a5a" stroke-width="2.3"/></svg></div>
<div class="cb on" style="top:860.2px"><svg width="22" height="22" viewBox="0 0 22 22"><path d="M5.6 12.1 L10.3 16.4 L16.1 5.8" fill="none" stroke="#5a5a5a" stroke-width="2.3"/></svg></div>
<div class="cb on" style="top:887.2px"><svg width="22" height="22" viewBox="0 0 22 22"><path d="M5.6 12.1 L10.3 16.4 L16.1 5.8" fill="none" stroke="#5a5a5a" stroke-width="2.3"/></svg></div>
<div class="t" style="left:1208.28px;top:108.61px;font-size:17px;font-weight:normal;font-style:normal;color:#555;transform:scaleX(1.2188);">(All)</div>
<div class="t" style="left:1209.50px;top:135.61px;font-size:17px;font-weight:normal;font-style:normal;color:#555;transform:scaleX(1.1283);">Civilians-Nil</div>
<div class="t" style="left:1208.37px;top:162.61px;font-size:17px;font-weight:normal;font-style:normal;color:#555;transform:scaleX(1.1261);">External/Other Forces-Civilians</div>
<div class="t" style="left:1208.37px;top:189.61px;font-size:17px;font-weight:normal;font-style:normal;color:#555;transform:scaleX(1.1342);">External/Other Forces-Nil</div>
<div class="t" style="left:1208.36px;top:216.61px;font-size:17px;font-weight:normal;font-style:normal;color:#555;transform:scaleX(1.1435);">External/Other Forces-Protesters</div>
<div class="t" style="left:1208.39px;top:243.61px;font-size:17px;font-weight:normal;font-style:normal;color:#555;transform:scaleX(1.1059);">External/Other Forces-Rebel Groups</div>
<div class="t" style="left:1208.37px;top:270.61px;font-size:17px;font-weight:normal;font-style:normal;color:#555;transform:scaleX(1.1347);">External/Other Forces-Rioters</div>
<div class="t" style="left:1208.38px;top:297.61px;font-size:17px;font-weight:normal;font-style:normal;color:#555;transform:scaleX(1.1188);">External/Other Forces-State Forces</div>
<div class="t" style="left:1208.31px;top:324.61px;font-size:17px;font-weight:normal;font-style:normal;color:#555;transform:scaleX(1.1876);">Identity Militias-Civilians</div>
<div class="t" style="left:1208.33px;top:351.61px;font-size:17px;font-weight:normal;font-style:normal;color:#555;transform:scaleX(1.1652);">Identity Militias-External/Other Forces</div>
<div class="t" style="left:1208.28px;top:378.61px;font-size:17px;font-weight:normal;font-style:normal;color:#555;transform:scaleX(1.2218);">Identity Militias-Identity Militias</div>
<div class="t" style="left:1208.28px;top:405.61px;font-size:17px;font-weight:normal;font-style:normal;color:#555;transform:scaleX(1.2168);">Identity Militias-Nil</div>
<div class="t" style="left:1208.29px;top:432.61px;font-size:17px;font-weight:normal;font-style:normal;color:#555;transform:scaleX(1.2105);">Identity Militias-Political Militias</div>
<div class="t" style="left:1208.33px;top:459.61px;font-size:17px;font-weight:normal;font-style:normal;color:#555;transform:scaleX(1.1674);">Identity Militias-State Forces</div>
<div class="t" style="left:1208.33px;top:486.61px;font-size:17px;font-weight:normal;font-style:normal;color:#555;transform:scaleX(1.1686);">Political Militias-Civilians</div>
<div class="t" style="left:1208.34px;top:513.61px;font-size:17px;font-weight:normal;font-style:normal;color:#555;transform:scaleX(1.1568);">Political Militias-External/Other Forces</div>
<div class="t" style="left:1208.30px;top:540.61px;font-size:17px;font-weight:normal;font-style:normal;color:#555;transform:scaleX(1.1982);">Political Militias-Nil</div>
<div class="t" style="left:1208.30px;top:567.61px;font-size:17px;font-weight:normal;font-style:normal;color:#555;transform:scaleX(1.1954);">Political Militias-Political Militias</div>
<div class="t" style="left:1208.31px;top:594.61px;font-size:17px;font-weight:normal;font-style:normal;color:#555;transform:scaleX(1.1860);">Political Militias-Protesters</div>
<div class="t" style="left:1208.36px;top:621.61px;font-size:17px;font-weight:normal;font-style:normal;color:#555;transform:scaleX(1.1391);">Political Militias-Rebel Groups</div>
<div class="t" style="left:1208.35px;top:648.61px;font-size:17px;font-weight:normal;font-style:normal;color:#555;transform:scaleX(1.1516);">Political Militias-State Forces</div>
<div class="t" style="left:1208.35px;top:675.61px;font-size:17px;font-weight:normal;font-style:normal;color:#555;transform:scaleX(1.1489);">Protesters-Civilians</div>
<div class="t" style="left:1208.36px;top:702.61px;font-size:17px;font-weight:normal;font-style:normal;color:#555;transform:scaleX(1.1395);">Protesters-External/Other Forces</div>
<div class="t" style="left:1208.32px;top:729.61px;font-size:17px;font-weight:normal;font-style:normal;color:#555;transform:scaleX(1.1810);">Protesters-Nil</div>
<div class="t" style="left:1208.31px;top:756.61px;font-size:17px;font-weight:normal;font-style:normal;color:#555;transform:scaleX(1.1860);">Protesters-Political Militias</div>
<div class="t" style="left:1208.33px;top:783.61px;font-size:17px;font-weight:normal;font-style:normal;color:#555;transform:scaleX(1.1722);">Protesters-Protesters</div>
<div class="t" style="left:1208.38px;top:810.61px;font-size:17px;font-weight:normal;font-style:normal;color:#555;transform:scaleX(1.1178);">Protesters-Rebel Groups</div>
<div class="t" style="left:1208.34px;top:837.61px;font-size:17px;font-weight:normal;font-style:normal;color:#555;transform:scaleX(1.1625);">Protesters-Rioters</div>
<div class="t" style="left:1208.37px;top:864.61px;font-size:17px;font-weight:normal;font-style:normal;color:#555;transform:scaleX(1.1320);">Protesters-State Forces</div>
<div class="t" style="left:1208.41px;top:891.61px;font-size:17px;font-weight:normal;font-style:normal;color:#555;transform:scaleX(1.0937);">Rebel Groups-Civilians</div>
<div class="t" style="left:1173.24px;top:77.88px;font-size:15.5px;font-weight:normal;font-style:normal;color:#aaa;transform:scaleX(1.0577);">Enter search text</div>
</body></html>
